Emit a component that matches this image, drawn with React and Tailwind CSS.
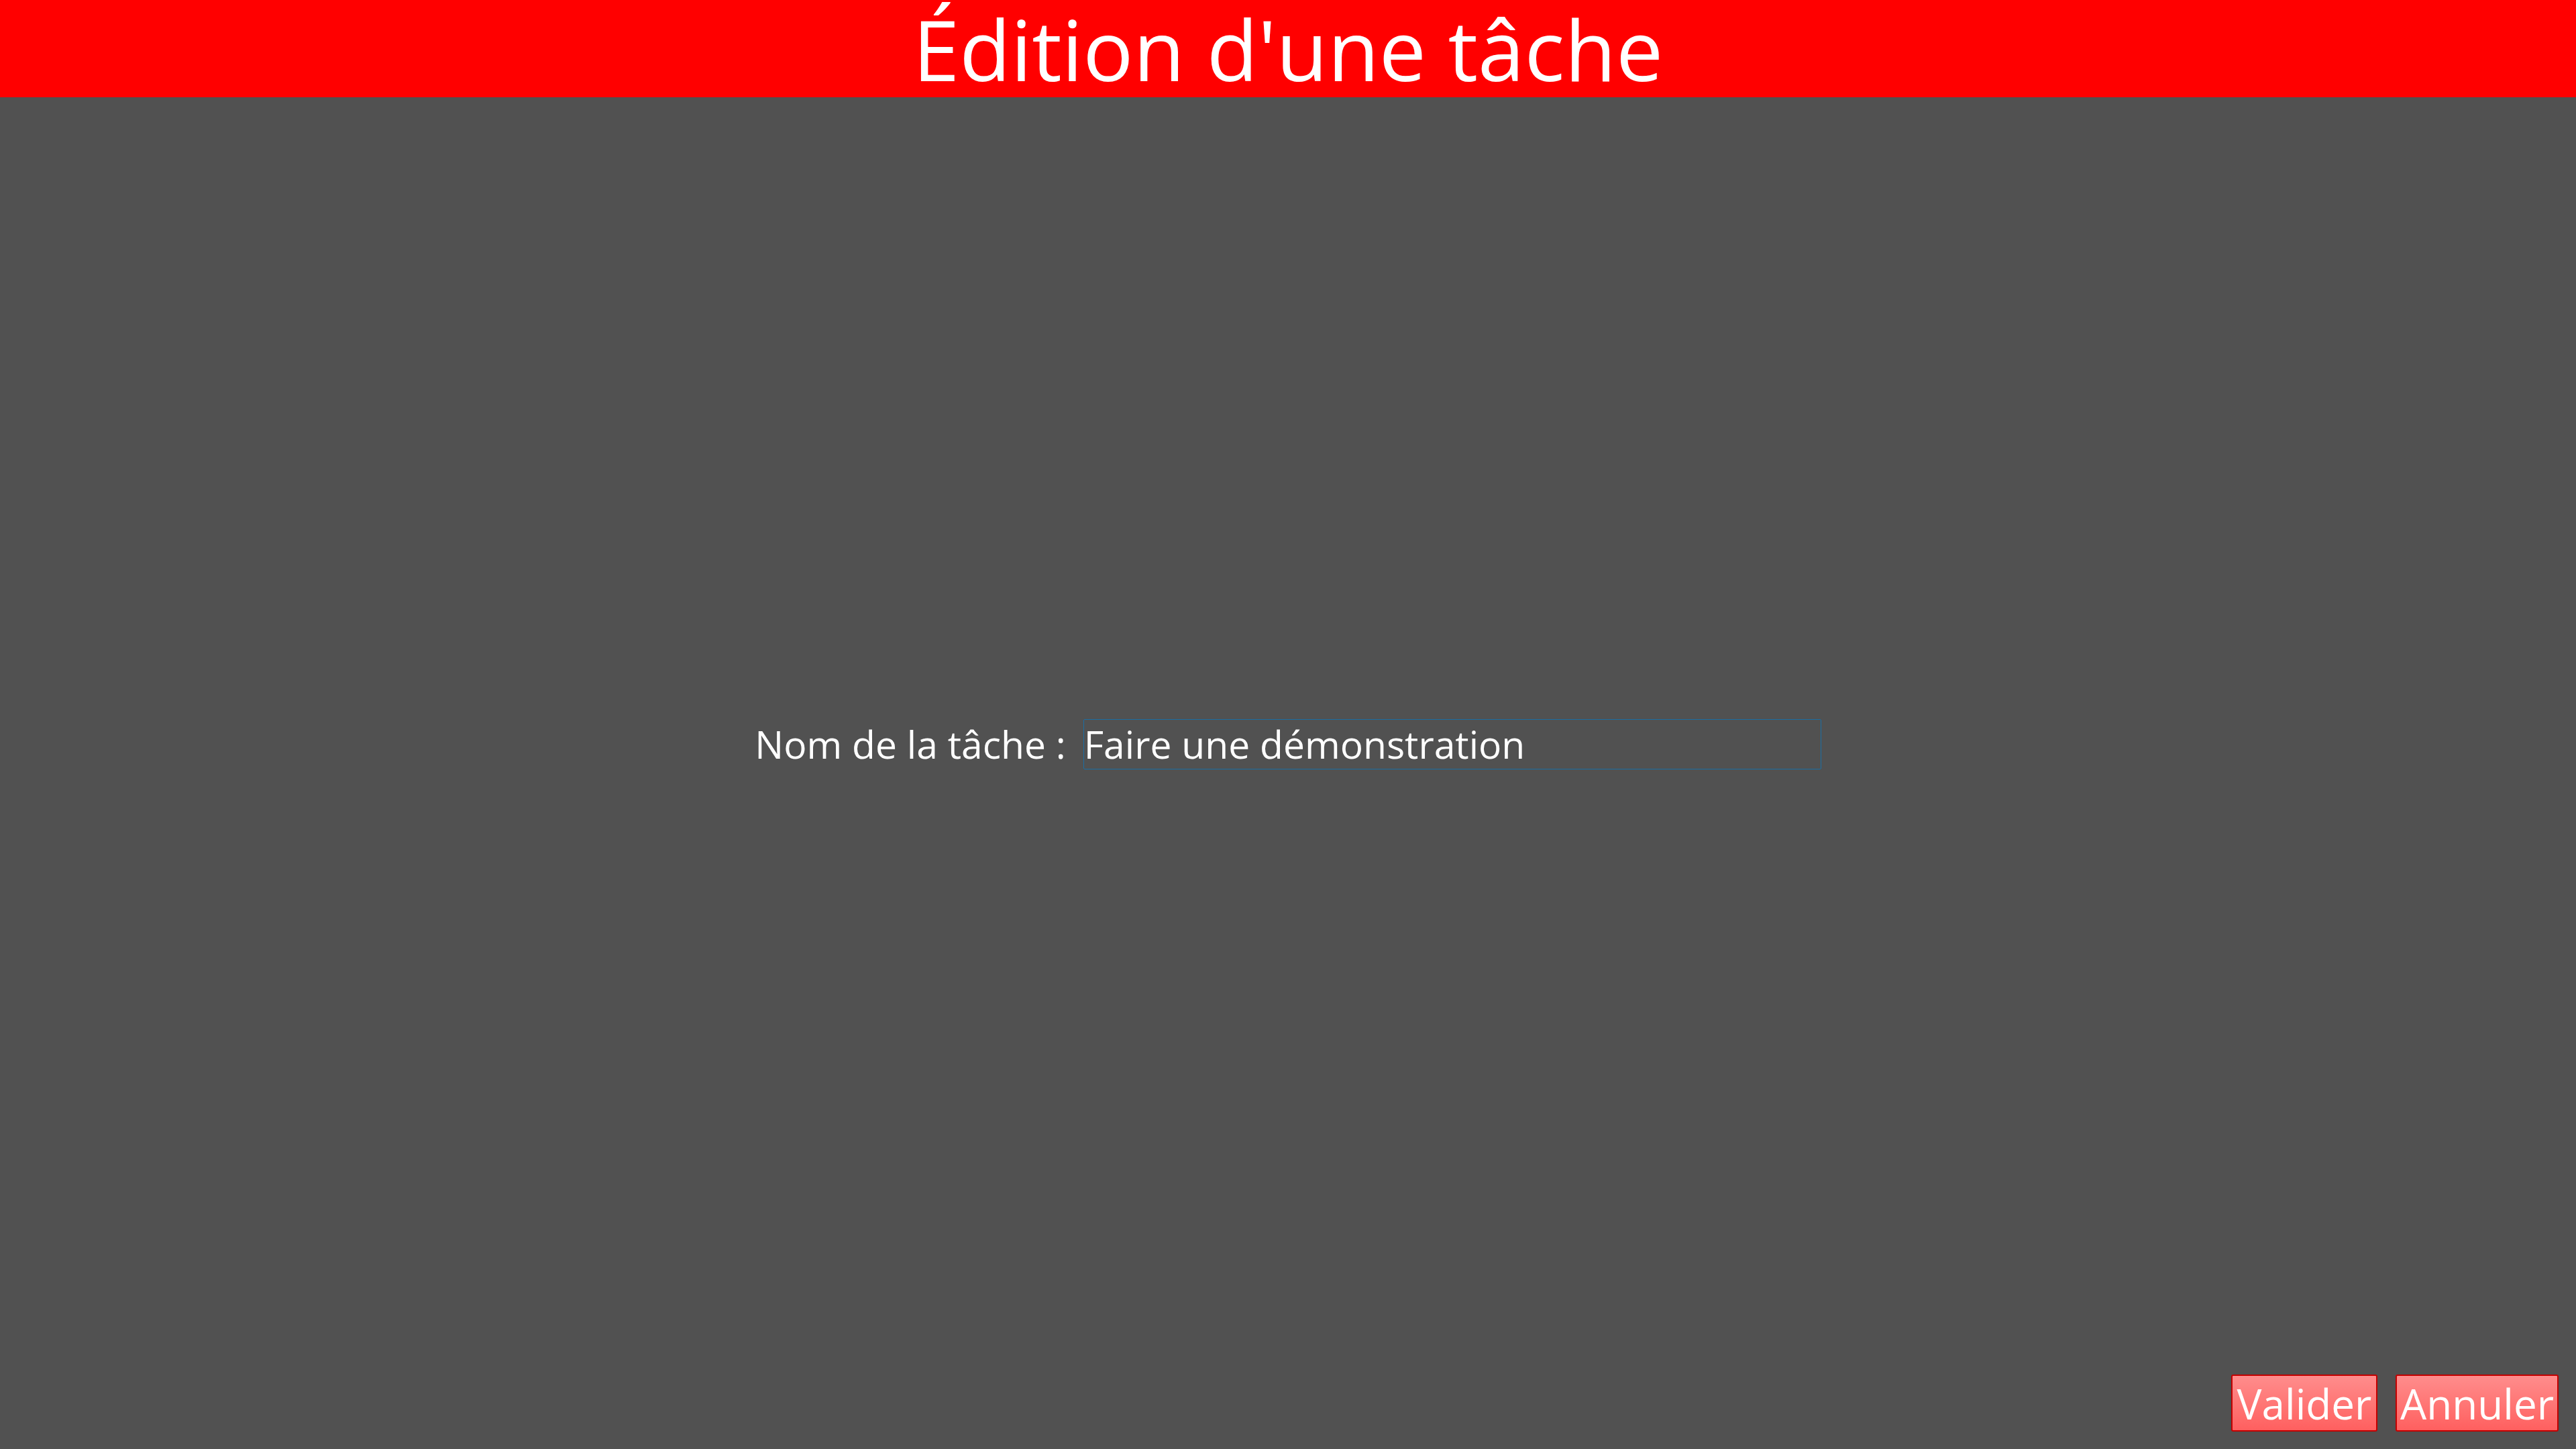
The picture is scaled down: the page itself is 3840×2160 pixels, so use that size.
import React from 'react';

export default function App() {
  return (
    <div className="w-full h-screen flex flex-col bg-[#515151] font-['Open_Sans',sans-serif] text-white">
      <header className="h-[145px] shrink-0 bg-[#ff0000] flex items-start justify-center">
        <h1 className="text-[125px] leading-[145px] font-normal">Édition d'une tâche</h1>
      </header>

      <main className="flex-1 flex items-center justify-center pt-[24px]">
        <div className="flex items-center gap-[26px]">
          <label className="text-[57px] leading-none">Nom de la tâche :</label>
          <input
            type="text"
            defaultValue="Faire une démonstration"
            className="w-[1100px] h-[75px] pl-0 pr-[3px] bg-transparent border border-[#1b6ea3] rounded-[2px] text-[57px] leading-none text-white outline-none"
          />
        </div>
      </main>

      <footer className="flex justify-end gap-[27px] pr-[26px] pb-[26px]">
        <button className="w-[218px] h-[85px] bg-gradient-to-b from-[#ff8c8c] to-[#ff5f5f] border-2 border-[#c40000] rounded-[3px] text-[62px] leading-none text-white">
          Valider
        </button>
        <button className="w-[243px] h-[85px] bg-gradient-to-b from-[#ff8c8c] to-[#ff5f5f] border-2 border-[#c40000] rounded-[3px] text-[62px] leading-none text-white">
          Annuler
        </button>
      </footer>
    </div>
  );
}
